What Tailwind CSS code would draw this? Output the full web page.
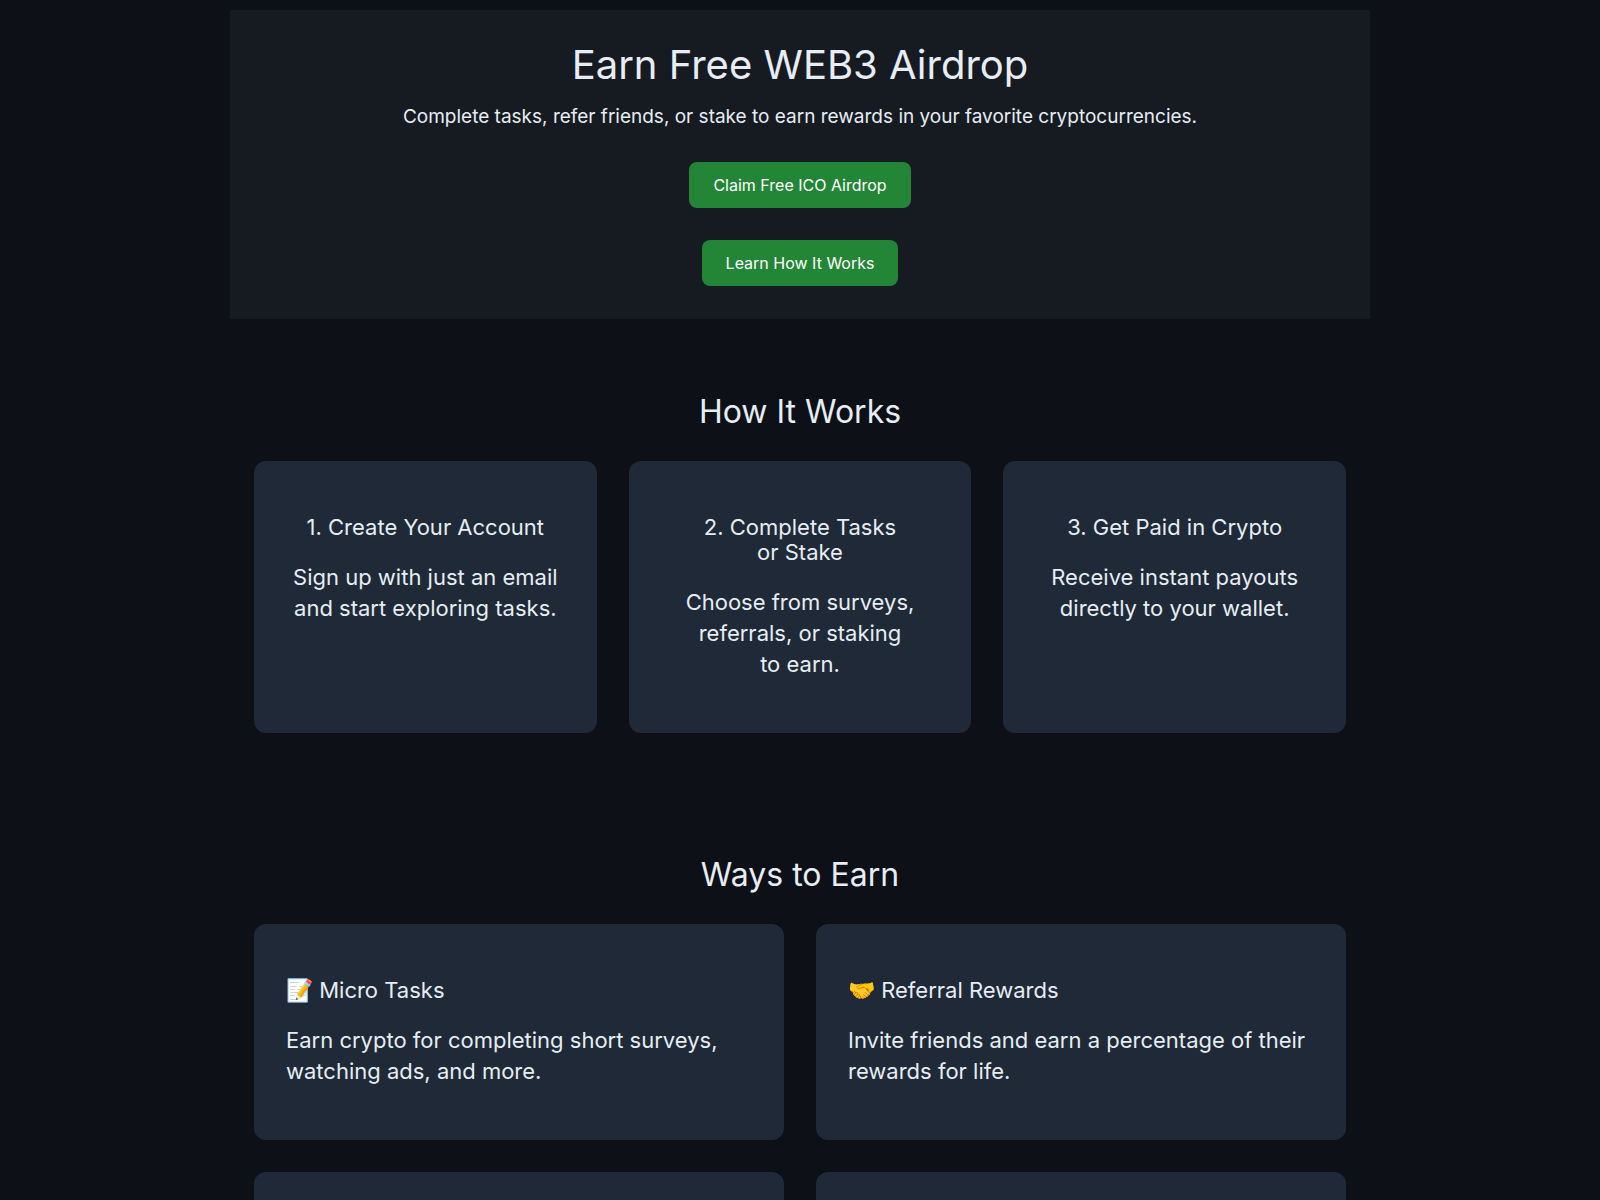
<!DOCTYPE html>
<html lang="en">

<head>
  <meta charset="UTF-8">
  <meta name="viewport" content="width=device-width, initial-scale=1.0">
  <title>Earn Free WEB3 Airdrop</title>
  <!-- Include Tailwind CSS via CDN -->
  <script src="https://cdn.jsdelivr.net/npm/@tailwindcss/browser@4"></script>
</head>

<body class="bg-[#0d1117] text-[#e6edf3] font-['Inter',sans-serif] min-h-screen">
  <main class="max-w-[1140px] mx-auto pt-[10px]">

    <!-- Hero -->
    <header class="bg-[#161b22] px-6 pt-8 pb-[33px] text-center">
      <h1 class="text-[40px] leading-[45px]">Earn Free WEB3 Airdrop</h1>
      <p class="mt-4 text-[19px] leading-[27px]">Complete tasks, refer friends, or stake to earn rewards in your favorite cryptocurrencies.</p>
      <div class="mt-8 flex flex-col items-center gap-8">
        <button type="button" class="bg-[#238636] hover:bg-[#2ea043] text-white text-base leading-[22px] px-6 py-3 rounded-lg cursor-pointer">Claim Free ICO Airdrop</button>
        <button type="button" class="bg-[#238636] hover:bg-[#2ea043] text-white text-base leading-[22px] px-6 py-3 rounded-lg cursor-pointer">Learn How It Works</button>
      </div>
    </header>

    <!-- How It Works -->
    <section class="px-6 pt-[74px] pb-16">
      <h2 class="text-[32px] leading-[38px] text-center mb-[30px]">How It Works</h2>
      <div class="grid grid-cols-1 md:grid-cols-3 gap-8 text-[22px] text-center">
        <div class="bg-[#1f2937] rounded-xl px-8 pt-[54px] pb-[53px]">
          <h3 class="leading-[25px] mb-[22px] text-pretty">1. Create Your Account</h3>
          <p class="leading-[31px] text-pretty">Sign up with just an email and start exploring tasks.</p>
        </div>
        <div class="bg-[#1f2937] rounded-xl px-8 pt-[54px] pb-[53px]">
          <h3 class="leading-[25px] mb-[22px] text-pretty">2. Complete Tasks or Stake</h3>
          <p class="leading-[31px] text-pretty">Choose from surveys, referrals, or staking to earn.</p>
        </div>
        <div class="bg-[#1f2937] rounded-xl px-8 pt-[54px] pb-[53px]">
          <h3 class="leading-[25px] mb-[22px] text-pretty">3. Get Paid in Crypto</h3>
          <p class="leading-[31px] text-pretty">Receive instant payouts directly to your wallet.</p>
        </div>
      </div>
    </section>

    <!-- Ways to Earn -->
    <section class="px-6 pt-[59px] pb-14">
      <h2 class="text-[32px] leading-[38px] text-center mb-[30px]">Ways to Earn</h2>
      <div class="grid grid-cols-1 md:grid-cols-2 gap-8 text-[22px]">
        <div class="bg-[#1f2937] rounded-xl px-8 pt-[54px] pb-[53px]">
          <h3 class="leading-[25px] mb-[22px] text-pretty">📝 Micro Tasks</h3>
          <p class="leading-[31px] text-pretty">Earn crypto for completing short surveys, watching ads, and more.</p>
        </div>
        <div class="bg-[#1f2937] rounded-xl px-8 pt-[54px] pb-[53px]">
          <h3 class="leading-[25px] mb-[22px] text-pretty">🤝 Referral Rewards</h3>
          <p class="leading-[31px] text-pretty">Invite friends and earn a percentage of their rewards for life.</p>
        </div>
        <div class="bg-[#1f2937] rounded-xl min-h-54"></div>
        <div class="bg-[#1f2937] rounded-xl min-h-54"></div>
      </div>
    </section>
  </main>
</body>

</html>
